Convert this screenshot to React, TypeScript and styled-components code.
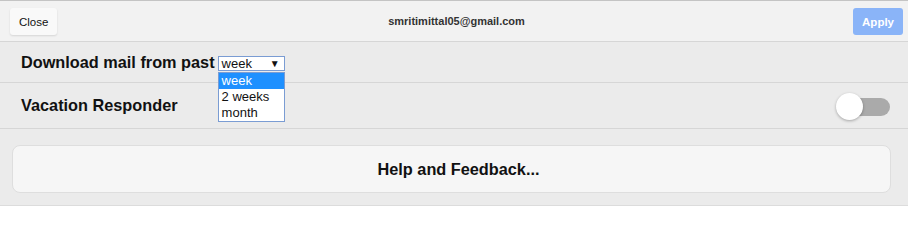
import styled, { createGlobalStyle } from 'styled-components';

const GlobalStyle = createGlobalStyle`
  html, body {
    margin: 0;
    padding: 0;
    background: #ffffff;
    font-family: 'Liberation Sans', Arial, sans-serif;
  }
`;

const Page = styled.div`
  width: 908px;
  height: 206px;
  background: #ebebeb;
  border-top: 1px solid #c4c4c4;
  border-bottom: 1px solid #dcdcdc;
  box-sizing: border-box;
  display: flex;
  flex-direction: column;
`;

const TopBar = styled.div`
  height: 40px;
  display: grid;
  grid-template-columns: 1fr auto 1fr;
  align-items: center;
  padding: 0 5px 0 10px;
  background: #f2f2f2;
  border-bottom: 1px solid #d6d6d6;
`;

const SmallButton = styled.button<{ $primary?: boolean }>`
  height: 27px;
  padding: 0 9px;
  border: none;
  border-radius: 3px;
  font-family: 'Liberation Sans', Arial, sans-serif;
  font-size: 11.5px;
  font-weight: ${(p) => (p.$primary ? 700 : 400)};
  color: ${(p) => (p.$primary ? '#ffffff' : '#111111')};
  background: ${(p) => (p.$primary ? '#8ab4f8' : '#f9f9f9')};
  box-shadow: ${(p) => (p.$primary ? 'none' : '0 1px 2px rgba(0,0,0,0.12)')};
  justify-self: ${(p) => (p.$primary ? 'end' : 'start')};
  margin-top: 1px;
`;

const Email = styled.div`
  font-size: 11px;
  font-weight: 700;
  color: #333333;
`;

const Row = styled.div<{ $h: number }>`
  height: ${(p) => p.$h}px;
  display: flex;
  align-items: center;
  justify-content: space-between;
  padding: 0 18px 0 21px;
  border-bottom: 1px solid #d6d6d6;
  position: relative;
  z-index: ${(p) => (p.$h === 40 ? 2 : 1)};
`;

const Label = styled.div`
  display: flex;
  align-items: center;
  gap: 3px;
  font-size: 16.3px;
  font-weight: 700;
  color: #111111;
`;

const SelectWrap = styled.div`
  position: relative;
  margin-top: 2px;
`;

const SelectBox = styled.div`
  width: 67px;
  height: 15px;
  box-sizing: border-box;
  border: 1px solid #7a9cd3;
  background: #ffffff;
  display: flex;
  align-items: center;
  justify-content: space-between;
  padding: 0 4px 0 3px;
  font-size: 13px;
  font-weight: 400;
  color: #111111;
`;

const Arrow = styled.span`
  font-size: 10px;
`;

const Options = styled.ul`
  position: absolute;
  top: 16px;
  left: 0;
  width: 67px;
  box-sizing: border-box;
  margin: 0;
  padding: 0;
  list-style: none;
  background: #ffffff;
  border: 1px solid #7a9cd3;
`;

const Option = styled.li<{ $active?: boolean }>`
  height: 16px;
  line-height: 16px;
  padding: 0 3px;
  font-size: 13px;
  font-weight: 400;
  color: ${(p) => (p.$active ? '#ffffff' : '#111111')};
  background: ${(p) => (p.$active ? '#1e90ff' : '#ffffff')};
`;

const Toggle = styled.div`
  position: relative;
  width: 54px;
  height: 28px;
  margin-top: 2px;
`;

const Track = styled.div`
  position: absolute;
  right: 0;
  top: 5px;
  width: 40px;
  height: 18px;
  border-radius: 9px;
  background: #aaaaaa;
`;

const Knob = styled.div`
  position: absolute;
  left: 0;
  top: 0;
  width: 27px;
  height: 27px;
  border-radius: 50%;
  background: #ffffff;
  box-shadow: 0 1px 3px rgba(0, 0, 0, 0.3);
`;

const Footer = styled.div`
  flex: 1;
  padding: 16px 17px 12px 12px;
  display: flex;
`;

const HelpButton = styled.button`
  flex: 1;
  padding: 0 0 0 14px;
  border: 1px solid #dedede;
  border-radius: 8px;
  background: #f6f6f6;
  font-family: 'Liberation Sans', Arial, sans-serif;
  font-size: 16.3px;
  font-weight: 700;
  color: #111111;
`;

const App = () => {
  return (
    <>
      <GlobalStyle />
      <Page>
        <TopBar>
          <SmallButton>Close</SmallButton>
          <Email>smritimittal05@gmail.com</Email>
          <SmallButton $primary>Apply</SmallButton>
        </TopBar>
        <Row $h={40}>
          <Label>
            Download mail from past
            <SelectWrap>
              <SelectBox>
                week<Arrow>▼</Arrow>
              </SelectBox>
              <Options>
                <Option $active>week</Option>
                <Option>2 weeks</Option>
                <Option>month</Option>
              </Options>
            </SelectWrap>
          </Label>
        </Row>
        <Row $h={45}>
          <Label>Vacation Responder</Label>
          <Toggle>
            <Track />
            <Knob />
          </Toggle>
        </Row>
        <Footer>
          <HelpButton>Help and Feedback...</HelpButton>
        </Footer>
      </Page>
    </>
  );
};

export default App;
